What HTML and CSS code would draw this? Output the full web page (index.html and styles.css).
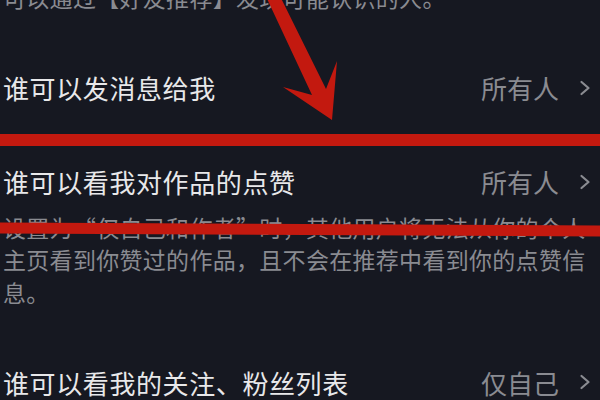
FILE: index.html
```html
<!DOCTYPE html>
<html lang="zh-CN">
<head>
<meta charset="utf-8">
<title>隐私设置</title>
<link rel="stylesheet" href="styles.css">
</head>
<body>
<div class="screen">
  <p class="note intro">可以通过【好友推荐】发现可能认识的人。</p>

  <div class="setting">
    <div class="row">
      <span class="label">谁可以发消息给我</span>
      <span class="value">所有人<svg class="chev" viewBox="0 0 12 16" width="12" height="16"><path d="M2.5 2 L9.5 8 L2.5 14"/></svg></span>
    </div>
  </div>

  <div class="setting">
    <div class="row">
      <span class="label">谁可以看我对作品的点赞</span>
      <span class="value">所有人<svg class="chev" viewBox="0 0 12 16" width="12" height="16"><path d="M2.5 2 L9.5 8 L2.5 14"/></svg></span>
    </div>
    <p class="note desc">设置为“仅自己和作者”时，其他用户将无法从你的个人主页看到你赞过的作品，且不会在推荐中看到你的点赞信息。</p>
  </div>

  <div class="setting">
    <div class="row">
      <span class="label">谁可以看我的关注、粉丝列表</span>
      <span class="value">仅自己<svg class="chev" viewBox="0 0 12 16" width="12" height="16"><path d="M2.5 2 L9.5 8 L2.5 14"/></svg></span>
    </div>
  </div>

  <svg class="marks" viewBox="0 0 600 400" width="600" height="400">
    <rect x="0" y="134" width="600" height="12" />
    <polygon points="0,222.5 600,225.5 600,236.5 0,233.5" />
    <polygon points="262,-12 312,95 283,87 332,120 337,61 326,89 276,-12" />
  </svg>
</div>
</body>
</html>
```

FILE: styles.css
```css
html, body {
  margin: 0;
  background: #161821;
}

body {
  width: 600px;
  height: 400px;
  overflow: hidden;
  font-family: "Noto Sans CJK SC", "Noto Sans", sans-serif;
}

.screen {
  position: relative;
  height: 400px;
  overflow: hidden;
  padding: 0 9px 0 3px;
}

.note {
  margin: 0;
  font-size: 23px;
  line-height: 32.5px;
  letter-spacing: 0.3px;
  color: #8a8b91;
}

.intro {
  margin-top: -19px;
}

.setting {
  padding-top: 54px;
}

.row {
  display: flex;
  justify-content: space-between;
  align-items: center;
  height: 40px;
}

.label {
  font-size: 26px;
  letter-spacing: 0.6px;
  color: #e8e8ea;
  white-space: nowrap;
}

.value {
  display: flex;
  align-items: center;
  gap: 20px;
  font-size: 26px;
  color: #8a8b91;
  white-space: nowrap;
}

.chev {
  fill: none;
  stroke: #8a8b91;
  stroke-width: 2.2;
  stroke-linecap: round;
  stroke-linejoin: round;
}

.desc {
  margin-top: 9px;
}

.marks {
  position: absolute;
  left: 0;
  top: 0;
  fill: #c3190f;
  pointer-events: none;
}
```
